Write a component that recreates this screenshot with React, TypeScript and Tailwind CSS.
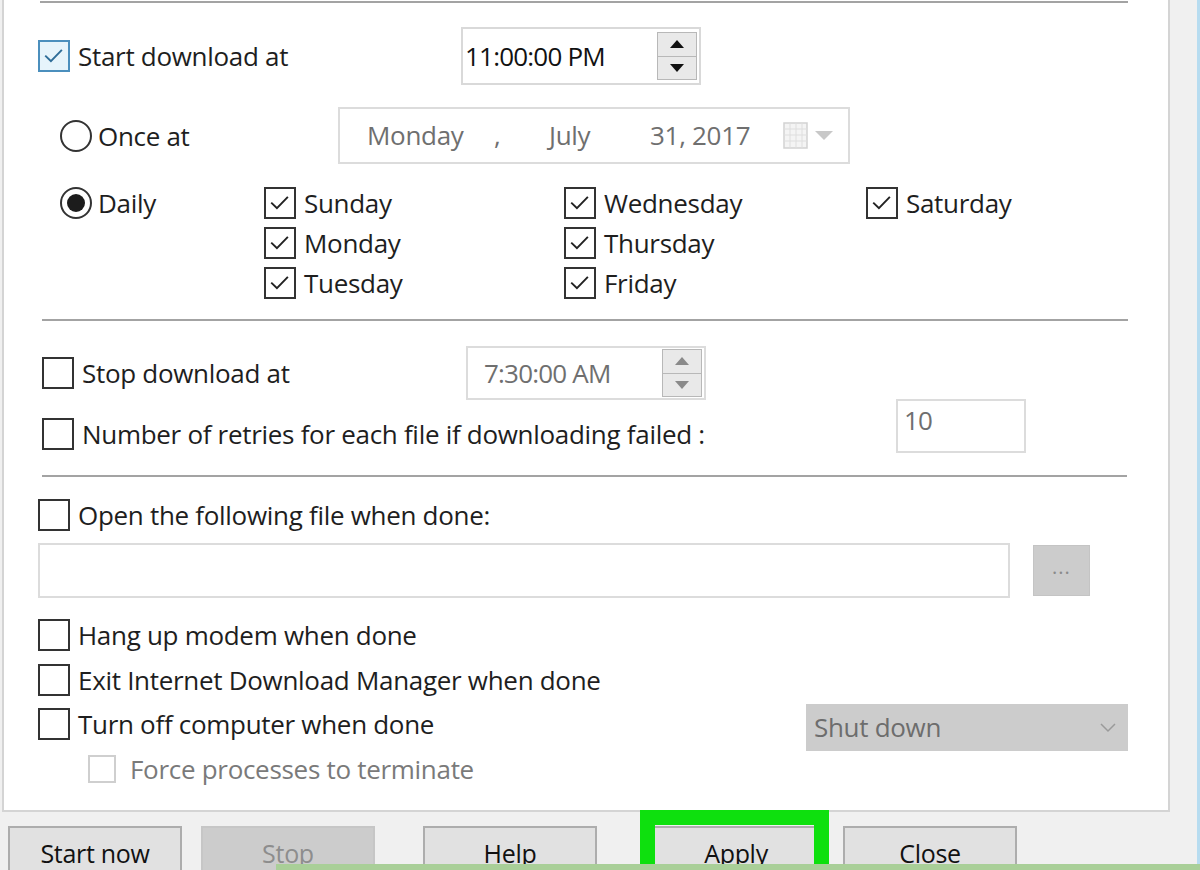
import React from 'react';

const ui = "font-['Open_Sans','Noto_Sans',sans-serif]";

function Check({ checked = false, focus = false, disabled = false, size = 32 }: { checked?: boolean; focus?: boolean; disabled?: boolean; size?: number }) {
    const box = focus
        ? 'border-[#4b8fbd] bg-[#e6f4fb]'
        : disabled
          ? 'border-[#cfcfcf] bg-white'
          : 'border-[#333333] bg-white';
    return (
        <span
            className={`flex shrink-0 items-center justify-center border-2 ${box}`}
            style={{ width: size, height: size }}
        >
            {checked && (
                <svg viewBox="0 0 32 32" className="h-full w-full">
                    <polyline
                        points="6,15.5 12.5,22 25,9"
                        fill="none"
                        stroke={focus ? '#2e6d98' : '#222'}
                        strokeWidth="2.2"
                    />
                </svg>
            )}
        </span>
    );
}

function Radio({ selected = false }: { selected?: boolean }) {
    return (
        <span className="flex h-[32px] w-[32px] shrink-0 items-center justify-center rounded-full border-2 border-[#333333] bg-white">
            {selected && <span className="h-[18px] w-[18px] rounded-full bg-[#1c1c1c]" />}
        </span>
    );
}

function Spinner({ disabled = false }: { disabled?: boolean }) {
    const c = disabled ? '#8a8a8a' : '#111';
    return (
        <div className="flex h-[48px] w-[40px] flex-col border border-[#b8b8b8]">
            <div className="flex flex-1 items-center justify-center border-b border-[#b8b8b8] bg-[#e9e9e9]">
                <svg width="14" height="8" viewBox="0 0 14 8"><polygon points="0,8 7,0 14,8" fill={c} /></svg>
            </div>
            <div className="flex flex-1 items-center justify-center bg-[#e9e9e9]">
                <svg width="14" height="8" viewBox="0 0 14 8"><polygon points="0,0 14,0 7,8" fill={c} /></svg>
            </div>
        </div>
    );
}

function Label({ children, gray = false }: { children: React.ReactNode; gray?: boolean }) {
    return (
        <span className={`whitespace-nowrap text-[26px] leading-none tracking-[-0.3px] ${gray ? 'text-[#7a7a7a]' : 'text-[#1e1e1e]'}`}>
            {children}
        </span>
    );
}

function Sep({ left, width }: { left: number; width: number }) {
    return <div className="h-[2px] bg-[#a3a3a3]" style={{ marginLeft: left, width }} />;
}

function DayItem({ name }: { name: string }) {
    return (
        <div className="flex h-[40px] items-center gap-[8px]">
            <Check checked size={32} />
            <Label>{name}</Label>
        </div>
    );
}

function Btn({ children, disabled = false, className = '' }: { children: React.ReactNode; disabled?: boolean; className?: string }) {
    return (
        <button
            className={`h-[56px] w-[174px] shrink-0 border-2 pb-[2px] ${
                disabled ? 'border-[#c6c6c6] bg-[#cccccc] text-[#8d8d8d]' : 'border-[#adadad] bg-[#e1e1e1] text-[#111]'
            } ${className}`}
        >
            {children}
        </button>
    );
}

export default function App() {
    return (
        <div className={`relative flex h-[870px] w-[1200px] overflow-hidden bg-[#f0f0f0] ${ui}`}>
            <div className="flex flex-1 flex-col">
                {/* Main panel */}
                <div className="ml-[2px] flex h-[812px] w-[1168px] shrink-0 flex-col border-b-2 border-l-2 border-r-2 border-[#d4d4d4] bg-white">
                    <div className="mt-[1px]">
                        <Sep left={36} width={1088} />
                    </div>

                    {/* Start download at */}
                    <div className="mt-[24px] flex h-[58px] items-center">
                        <div className="ml-[34px] flex w-[423px] items-center gap-[8px]">
                            <Check checked focus />
                            <Label>Start download at</Label>
                        </div>
                        <div className="flex h-[58px] w-[240px] items-center justify-between border-2 border-[#d9d9d9] pl-[2px] pr-[2px]">
                            <span className="text-[26px] tracking-[-0.8px] text-[#111]">11:00:00 PM</span>
                            <Spinner />
                        </div>
                    </div>

                    {/* Once at */}
                    <div className="mt-[22px] flex h-[57px] items-center">
                        <div className="ml-[56px] flex w-[278px] items-center gap-[6px]">
                            <Radio />
                            <Label>Once at</Label>
                        </div>
                        <div className="flex h-[57px] w-[512px] items-center border-2 border-[#dcdcdc] text-[26px] tracking-[-0.3px] text-[#6f6f6f]">
                            <span className="ml-[27px] w-[127px]">Monday</span>
                            <span className="w-[55px]">,</span>
                            <span className="w-[101px]">July</span>
                            <span className="w-[133px]">31, 2017</span>
                            <svg width="26" height="28" viewBox="0 0 26 28" className="mr-[6px]">
                                <rect x="1" y="1" width="23" height="25" fill="#f4f4f4" stroke="#d2d2d2" strokeWidth="1.5" />
                                <path d="M1 7H24M1 13H24M1 19H24M7 1V26M13 1V26M19 1V26" stroke="#dedede" strokeWidth="1" />
                            </svg>
                            <svg width="18" height="10" viewBox="0 0 18 10"><polygon points="0,0 18,0 9,9" fill="#c8c8c8" /></svg>
                        </div>
                    </div>

                    {/* Daily */}
                    <div className="mt-[19px] flex">
                        <div className="ml-[56px] flex h-[40px] w-[204px] items-center gap-[6px]">
                            <Radio selected />
                            <Label>Daily</Label>
                        </div>
                        <div className="flex w-[300px] flex-col">
                            <DayItem name="Sunday" />
                            <DayItem name="Monday" />
                            <DayItem name="Tuesday" />
                        </div>
                        <div className="flex w-[302px] flex-col">
                            <DayItem name="Wednesday" />
                            <DayItem name="Thursday" />
                            <DayItem name="Friday" />
                        </div>
                        <div className="flex flex-col">
                            <DayItem name="Saturday" />
                        </div>
                    </div>

                    <div className="mt-[16px]">
                        <Sep left={38} width={1086} />
                    </div>

                    {/* Stop download at */}
                    <div className="mt-[26px] flex h-[52px] items-center">
                        <div className="ml-[38px] flex w-[424px] items-center gap-[8px]">
                            <Check />
                            <Label>Stop download at</Label>
                        </div>
                        <div className="flex h-[54px] w-[240px] items-center justify-between border-2 border-[#dcdcdc] pl-[16px] pr-[2px]">
                            <span className="text-[26px] tracking-[-0.8px] text-[#6f6f6f]">7:30:00 AM</span>
                            <Spinner disabled />
                        </div>
                    </div>

                    {/* Retries */}
                    <div className="flex h-[54px] items-start">
                        <div className="ml-[38px] mt-[19px] flex w-[854px] items-center gap-[8px]">
                            <Check />
                            <Label>Number of retries for each file if downloading failed :</Label>
                        </div>
                        <div className="h-[54px] w-[130px] border-2 border-[#dcdcdc] pl-[6px] pt-[4px] text-[26px] leading-[30px] tracking-[-0.8px] text-[#6f6f6f]">
                            10
                        </div>
                    </div>

                    <div className="mt-[22px]">
                        <Sep left={38} width={1085} />
                    </div>

                    {/* Open file */}
                    <div className="ml-[34px] mt-[22px] flex h-[32px] items-center gap-[8px]">
                        <Check />
                        <Label>Open the following file when done:</Label>
                    </div>
                    <div className="mt-[12px] flex h-[55px] items-center">
                        <div className="ml-[34px] h-[55px] w-[972px] border-2 border-[#dcdcdc]" />
                        <div className="ml-[23px] flex h-[51px] w-[57px] items-center justify-center border border-[#c4c4c4] bg-[#cccccc] pb-[8px] text-[20px] leading-none tracking-[1px] text-[#8a8a8a]">
                            ...
                        </div>
                    </div>

                    <div className="ml-[34px] mt-[21px] flex h-[32px] items-center gap-[8px]">
                        <Check />
                        <Label>Hang up modem when done</Label>
                    </div>
                    <div className="ml-[34px] mt-[13px] flex h-[32px] items-center gap-[8px]">
                        <Check />
                        <Label>Exit Internet Download Manager when done</Label>
                    </div>

                    <div className="mt-[8px] flex h-[47px] items-start">
                        <div className="ml-[34px] mt-[4px] flex w-[768px] items-center gap-[8px]">
                            <Check />
                            <Label>Turn off computer when done</Label>
                        </div>
                        <div className="flex h-[47px] w-[322px] items-center justify-between bg-[#cccccc] pl-[8px] pr-[12px] text-[26px] tracking-[-0.3px] text-[#6d6d6d]">
                            <span>Shut down</span>
                            <svg width="16" height="10" viewBox="0 0 16 10"><polyline points="1,1 8,8 15,1" fill="none" stroke="#9a9a9a" strokeWidth="1.5" /></svg>
                        </div>
                    </div>

                    <div className="ml-[84px] mt-[3px] flex h-[30px] items-center gap-[14px]">
                        <Check disabled size={28} />
                        <Label gray>Force processes to terminate</Label>
                    </div>
                </div>

                {/* Buttons */}
                <div className="mt-[14px] flex text-[25px] leading-none tracking-[-0.3px]">
                    <Btn className="ml-[8px]">Start now</Btn>
                    <Btn disabled className="ml-[19px]">Stop</Btn>
                    <Btn className="ml-[48px]">Help</Btn>
                    <Btn className="ml-[52px]">Apply</Btn>
                    <Btn className="ml-[20px]">Close</Btn>
                </div>
            </div>

            {/* Right window edge */}
            <div className="h-[870px] w-[3px] shrink-0 bg-[#b7dcf0]" />

            {/* Highlight around Apply */}
            <div className="absolute left-[640px] top-[810px] h-[80px] w-[189px] border-[15px] border-[#0ee00e]" />
            {/* faint green bar at the bottom edge */}
            <div className="absolute bottom-0 left-[276px] h-[6px] w-[924px] bg-[#a9cf98]" />
        </div>
    );
}
